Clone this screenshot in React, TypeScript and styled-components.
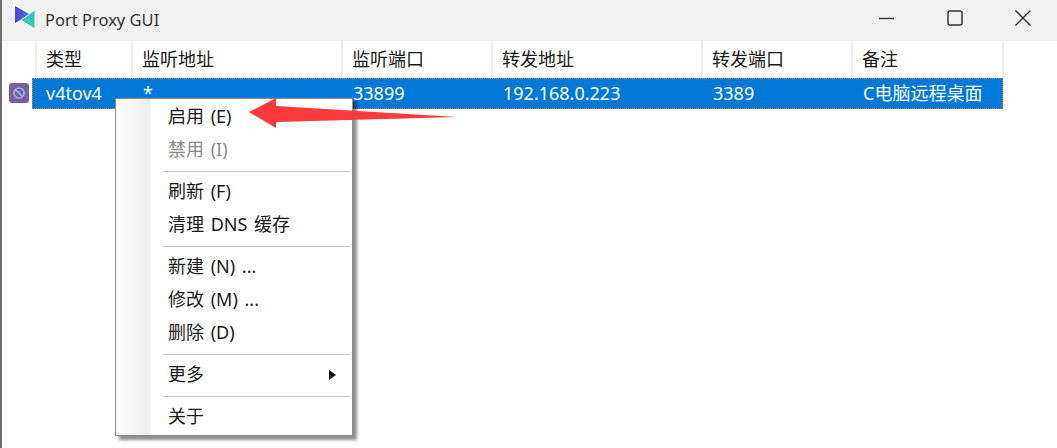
import styled, { createGlobalStyle } from 'styled-components';

const columns = [
  { title: '类型', width: 100, value: 'v4tov4' },
  { title: '监听地址', width: 210, value: '*' },
  { title: '监听端口', width: 150, value: '33899' },
  { title: '转发地址', width: 210, value: '192.168.0.223' },
  { title: '转发端口', width: 150, value: '3389' },
  { title: '备注', width: 151, value: 'C电脑远程桌面' },
];

const menuGroups = [
  [
    { label: '启用 (E)' },
    { label: '禁用 (I)', disabled: true },
  ],
  [{ label: '刷新 (F)' }, { label: '清理 DNS 缓存' }],
  [{ label: '新建 (N) ...' }, { label: '修改 (M) ...' }, { label: '删除 (D)' }],
  [{ label: '更多', more: true }],
  [{ label: '关于' }],
];

export default function App() {
  return (
    <S.Window>
      <GlobalStyle />
      <S.TitleBar>
        <S.Logo width='24' height='26' viewBox='0 0 24 26'>
          <defs>
            <linearGradient id='logoLeft' x1='0' y1='0' x2='1' y2='0'>
              <stop offset='0' stopColor='#5a3fc8' />
              <stop offset='1' stopColor='#3f7fdc' />
            </linearGradient>
            <linearGradient id='logoRight' x1='0' y1='0' x2='0' y2='1'>
              <stop offset='0' stopColor='#35b4d8' />
              <stop offset='1' stopColor='#2fd6a4' />
            </linearGradient>
          </defs>
          <path d='M1 1 L16 9.5 L1 18 Z' fill='url(#logoLeft)' />
          <path
            d='M21 5 L21 24 L7 15 Z'
            fill='url(#logoRight)'
            stroke='#f1f1f1'
            strokeWidth='1'
          />
        </S.Logo>
        <S.AppName>Port Proxy GUI</S.AppName>
        <S.Controls>
          <S.Control>
            <svg width='16' height='16' viewBox='0 0 16 16'>
              <path d='M0 8.5 H15' stroke='#333' strokeWidth='1.4' fill='none' />
            </svg>
          </S.Control>
          <S.Control>
            <svg width='16' height='16' viewBox='0 0 16 16'>
              <rect x='1' y='1' width='14' height='14' rx='2' stroke='#333' strokeWidth='1.5' fill='none' />
            </svg>
          </S.Control>
          <S.Control>
            <svg width='16' height='16' viewBox='0 0 16 16'>
              <path d='M0.5 0.5 L15.5 15.5 M15.5 0.5 L0.5 15.5' stroke='#333' strokeWidth='1.4' fill='none' />
            </svg>
          </S.Control>
        </S.Controls>
      </S.TitleBar>

      <S.Body>
        <S.HeaderRow>
          <S.HeaderGutter />
          {columns.map((col) => (
            <S.HeaderCell key={col.title} $width={col.width}>
              {col.title}
            </S.HeaderCell>
          ))}
        </S.HeaderRow>
        <S.DataLine>
          <S.StateIcon>
            <svg width='14' height='14' viewBox='0 0 14 14'>
              <circle cx='7' cy='7' r='5' stroke='#8fb6e4' strokeWidth='1.7' fill='none' />
              <path d='M3.6 3.6 L10.4 10.4' stroke='#8fb6e4' strokeWidth='1.7' />
            </svg>
          </S.StateIcon>
          <S.SelectedRow>
            {columns.map((col) => (
              <S.DataCell key={col.title} $width={col.width}>
                {col.value}
              </S.DataCell>
            ))}
          </S.SelectedRow>
        </S.DataLine>

        <S.Menu>
          {menuGroups.map((group, i) => (
            <S.MenuGroup key={i} $first={i === 0}>
              {group.map((item) => (
                <S.MenuItem key={item.label} $disabled={'disabled' in item}>
                  {item.label}
                  {'more' in item && <S.MoreArrow />}
                </S.MenuItem>
              ))}
            </S.MenuGroup>
          ))}
        </S.Menu>

        <S.Pointer width='212' height='34' viewBox='0 0 212 34'>
          <path d='M0 15 L27 1 L27 9 L208 20 L27 25 L27 31 Z' fill='#fb3a3c' />
        </S.Pointer>
      </S.Body>
    </S.Window>
  );
}

const GlobalStyle = createGlobalStyle`
  html, body {
    margin: 0;
    background: #fff;
    overflow: hidden;
  }
`;

const S = {
  Window: styled.div`
    width: 1057px;
    height: 448px;
    box-sizing: border-box;
    border-left: 2px solid #6e6e6e;
    background: #fff;
    font-family: 'Noto Sans', 'Noto Sans CJK SC', sans-serif;
    color: #1a1a1a;
    overflow: hidden;
  `,
  TitleBar: styled.div`
    height: 41px;
    display: flex;
    align-items: center;
    padding-left: 12px;
    background: #f1f1f1;
  `,
  Logo: styled.svg`
    flex: none;
    margin-top: -5px;
  `,
  AppName: styled.div`
    margin-left: 7px;
    margin-top: -2px;
    font-size: 16.5px;
    color: #333;
  `,
  Controls: styled.div`
    display: flex;
    align-self: flex-start;
    margin-left: auto;
  `,
  Control: styled.div`
    width: 68px;
    height: 36px;
    display: flex;
    align-items: center;
    justify-content: center;
  `,
  Body: styled.div`
    position: relative;
    height: 407px;
  `,
  HeaderRow: styled.div`
    display: flex;
    height: 37px;
  `,
  HeaderGutter: styled.div`
    width: 35px;
    box-sizing: border-box;
    border-right: 2px solid #efefef;
  `,
  HeaderCell: styled.div<{ $width: number }>`
    width: ${(p) => p.$width}px;
    box-sizing: border-box;
    padding: 5px 0 0 9px;
    border-right: 2px solid #efefef;
    font-size: 18px;
    line-height: 26px;
    white-space: nowrap;

    &:nth-child(2) {
      width: 96px;
    }
  `,
  DataLine: styled.div`
    display: flex;
    height: 31px;
    padding-left: 7px;
  `,
  StateIcon: styled.div`
    width: 20px;
    height: 20px;
    margin-top: 5px;
    margin-right: 3px;
    border-radius: 3px;
    background: #7b5f9c;
    display: flex;
    align-items: center;
    justify-content: center;
  `,
  SelectedRow: styled.div`
    display: flex;
    box-sizing: border-box;
    width: 971px;
    background: #0078d7;
    outline: 1px dotted #c8883c;
    outline-offset: -1px;
    color: #fff;
  `,
  DataCell: styled.div<{ $width: number }>`
    width: ${(p) => p.$width}px;
    box-sizing: border-box;
    padding-left: 11px;
    font-size: 18px;
    line-height: 30px;
    white-space: nowrap;

    &:first-child {
      padding-left: 14px;
    }
  `,
  Menu: styled.div`
    position: absolute;
    left: 113px;
    top: 57px;
    width: 238px;
    box-sizing: border-box;
    padding: 2px 2px 1px;
    border: 1px solid #8a8a8a;
    background: linear-gradient(90deg, #fdfdfd 0, #ededed 34px, #fff 35px);
    box-shadow: 4px 4px 3px rgba(0, 0, 0, 0.45);
  `,
  MenuGroup: styled.div<{ $first: boolean }>`
    margin-left: 45px;
    ${(p) => !p.$first && 'border-top: 1px solid #c6c6c6; margin-top: 4px; padding-top: 4px;'}
  `,
  MenuItem: styled.div<{ $disabled: boolean }>`
    position: relative;
    height: 33px;
    padding-left: 5px;
    font-size: 18px;
    line-height: 31px;
    word-spacing: 2px;
    white-space: nowrap;
    color: ${(p) => (p.$disabled ? '#8a8a8a' : '#1a1a1a')};
  `,
  MoreArrow: styled.span`
    position: absolute;
    right: 14px;
    top: 11px;
    border-left: 7px solid #111;
    border-top: 5px solid transparent;
    border-bottom: 5px solid transparent;
  `,
  Pointer: styled.svg`
    position: absolute;
    left: 247px;
    top: 56px;
  `,
};
